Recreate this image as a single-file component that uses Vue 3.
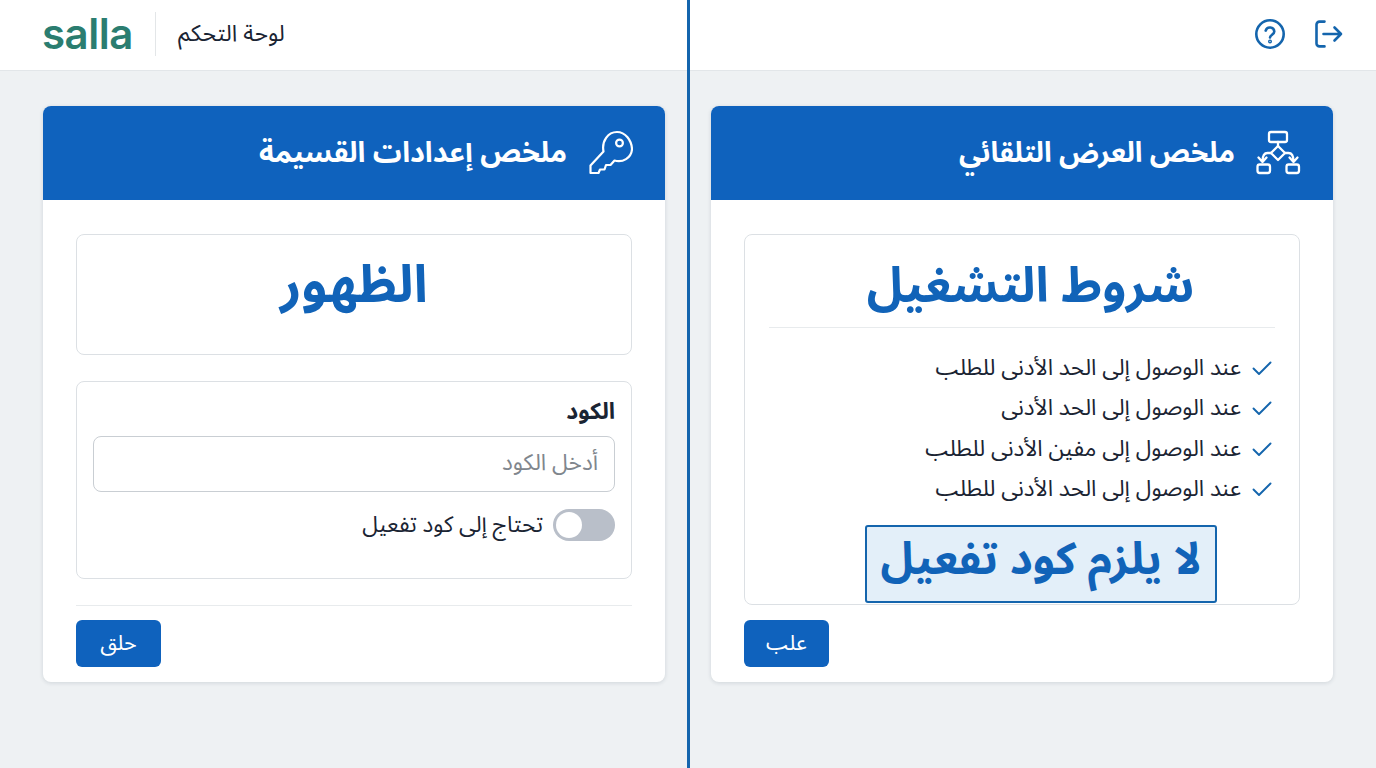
<template>
  <div class="page">
    <div class="split-line"></div>

    <header class="topbar">
      <div class="brand">
        <span class="logo">salla</span>
        <span class="brand-sep"></span>
        <span class="brand-title" dir="rtl">لوحة التحكم</span>
      </div>
      <div class="actions">
        <svg viewBox="0 0 32 32" width="32" height="32" fill="none" stroke="#1465ad" stroke-width="2.6" stroke-linecap="round" stroke-linejoin="round">
          <circle cx="16" cy="16" r="13.7" />
          <path d="M11.7 12.6a4.4 4.4 0 0 1 8.6 .9c0 2.9-4.3 3.4-4.3 6" />
          <circle cx="16" cy="23.4" r="0.7" />
        </svg>
        <svg viewBox="0 0 32 32" width="32" height="32" fill="none" stroke="#1465ad" stroke-width="2.6" stroke-linecap="round" stroke-linejoin="round">
          <path d="M12.500 3.600H7.500a3 3 0 0 0-3 3v18.800a3 3 0 0 0 3 3h5" />
          <path d="M11.500 16h17.500M22.500 9.500l6.500 6.500-6.500 6.500" />
        </svg>
      </div>
    </header>

    <main class="columns">
      <section class="col">
        <div class="card">
          <div class="card-head" dir="rtl">
            <svg viewBox="0 0 46 46" width="46" height="46" fill="none" stroke="#fff" stroke-width="2.200" stroke-linejoin="round" stroke-linecap="round">
              <path d="M16.500 21.500 3.500 35.500v7.500h8l1.500-3.500h4.500l1.500-4.500h4.500l4-4.500c8 2.500 17-2.500 17.500-11.500C44.500 10.500 38.500 2 30 2c-9 0-15.500 9-13.500 19.500Z" />
              <circle cx="32.500" cy="13" r="3.400" />
            </svg>
            <h2 class="card-title">ملخص إعدادات القسيمة</h2>
          </div>
          <div class="card-body" dir="rtl">
            <div class="panel panel-visibility">
              <h1 class="big-title">الظهور</h1>
            </div>
            <div class="panel panel-form">
              <label class="field-label">الكود</label>
              <input class="field" type="text" placeholder="أدخل الكود" />
              <div class="toggle-row">
                <span class="toggle"><span class="knob"></span></span>
                <span class="toggle-label">تحتاج إلى كود تفعيل</span>
              </div>
            </div>
            <div class="rule"></div>
            <button class="btn">حلق</button>
          </div>
        </div>
      </section>

      <section class="col">
        <div class="card">
          <div class="card-head" dir="rtl">
            <svg viewBox="0 0 46 46" width="46" height="46" fill="none" stroke="#fff" stroke-width="2.300" stroke-linejoin="round" stroke-linecap="round">
              <rect x="14" y="2" width="18" height="10" rx="2" />
              <path d="M23 12v4" />
              <path d="M23 16 30 23 23 30 16 23Z" />
              <path d="M16 23h-3.500c-3.500 0-5 3-5 8.500M3.500 27.500l4 4.500 4-4.500" />
              <path d="M30 23h3.500c3.500 0 5 3 5 8.500M34.500 27.500l4 4.500 4-4.500" />
              <rect x="2.500" y="34.500" width="12.500" height="8.500" rx="2.200" />
              <rect x="31.500" y="34.500" width="12.500" height="8.500" rx="2.200" />
            </svg>
            <h2 class="card-title auto-title">ملخص العرض التلقائي</h2>
          </div>
          <div class="card-body" dir="rtl">
            <div class="panel panel-terms">
              <h1 class="big-title terms-title">شروط التشغيل</h1>
              <ul class="terms">
                <li v-for="(term, i) in terms" :key="i">
                  <svg viewBox="0 0 20 20" width="20" height="20" fill="none" stroke="#1465ad" stroke-width="1.900" stroke-linecap="round" stroke-linejoin="round">
                    <path d="M1.500 10.500 7 16 18.500 4.500" />
                  </svg>
                  <span>{{ term }}</span>
                </li>
              </ul>
              <div class="notice">لا يلزم كود تفعيل</div>
            </div>
            <button class="btn btn-right">علب</button>
          </div>
        </div>
      </section>
    </main>
  </div>
</template>

<script setup>
const terms = [
  'عند الوصول إلى الحد الأدنى للطلب',
  'عند الوصول إلى الحد الأدنى',
  'عند الوصول إلى مفين الأدنى للطلب',
  'عند الوصول إلى الحد الأدنى للطلب'
]
</script>

<style scoped>
.page {
  position: relative;
  width: 1376px;
  height: 768px;
  overflow: hidden;
  background: #eef1f3;
  font-family: "Noto Sans Arabic", "Noto Sans", "DejaVu Sans", sans-serif;
  color: #1a2433;
}

.split-line {
  position: absolute;
  left: 687px;
  top: 0;
  bottom: 0;
  width: 3px;
  background: #1465ad;
  z-index: 2;
}

.topbar {
  display: flex;
  justify-content: space-between;
  align-items: center;
  height: 68px;
  padding: 0 32px 2px 42px;
  background: #fff;
  border-bottom: 1px solid #e2e6e9;
}

.brand {
  display: flex;
  align-items: center;
}

.logo {
  width: 90px;
  font-family: Inter, sans-serif;
  font-size: 42px;
  font-weight: 600;
  line-height: 44px;
  letter-spacing: -0.5px;
  color: #2b7d70;
}

.brand-sep {
  width: 1px;
  height: 44px;
  margin: 0 22px 0 23px;
  background: #e3e6e8;
}

.brand-title {
  font-size: 23px;
  line-height: 32px;
  color: #1a2433;
}

.actions {
  display: flex;
  gap: 26px;
  align-items: center;
}

.columns {
  display: grid;
  grid-template-columns: 622px 622px;
  gap: 46px;
  padding: 35px 43px 0;
}

.card {
  height: 576px;
  background: #fff;
  border-radius: 8px;
  overflow: hidden;
  box-shadow: 0 1px 4px rgba(30, 50, 70, 0.14);
}

.card-head {
  display: flex;
  align-items: center;
  gap: 20px;
  height: 94px;
  padding: 0 32px;
  background: #0f62bd;
  color: #fff;
}

.card-title {
  margin: 0 0 1px;
  font-size: 28.700px;
  line-height: 40px;
  font-weight: 700;
}

.auto-title {
  font-size: 28.200px;
}

.card-body {
  padding: 34px 33px 0;
}

.panel {
  border: 1px solid #dcE0e4;
  border-radius: 8px;
  background: #fff;
}

.panel-visibility {
  display: flex;
  justify-content: center;
  height: 121px;
  box-sizing: border-box;
  padding-top: 19px;
}

.big-title {
  margin: 0;
  font-size: 52px;
  line-height: 64px;
  font-weight: 700;
  color: #1163b8;
}

.panel-form {
  height: 198px;
  box-sizing: border-box;
  margin-top: 26px;
  padding: 16px 16px 0;
}

.field-label {
  display: block;
  font-size: 23px;
  line-height: 28px;
  font-weight: 700;
  color: #1a2433;
}

.field {
  display: block;
  width: 100%;
  height: 56px;
  box-sizing: border-box;
  margin-top: 10px;
  padding: 0 16px 3px;
  border: 1.500px solid #c9ced3;
  border-radius: 8px;
  font-family: inherit;
  font-size: 22.600px;
  background: #fff;
}

.field::placeholder {
  color: #80868d;
}

.toggle-row {
  display: flex;
  align-items: center;
  gap: 10px;
  margin-top: 17px;
}

.toggle {
  display: flex;
  justify-content: flex-end;
  align-items: center;
  width: 62px;
  height: 32px;
  padding: 0 3px;
  box-sizing: border-box;
  border-radius: 16px;
  background: #b9bfc9;
}

.knob {
  width: 26px;
  height: 26px;
  border-radius: 50%;
  background: #fff;
}

.toggle-label {
  font-size: 22.500px;
  line-height: 32px;
}

.rule {
  height: 1px;
  margin-top: 26px;
  background: #e8ebed;
}

.btn {
  display: block;
  width: 85px;
  height: 47px;
  margin: 14px auto 0 0;
  padding: 0 0 2px;
  border: none;
  border-radius: 6px;
  background: #0f62bd;
  color: #fff;
  font-family: inherit;
  font-size: 21.500px;
  line-height: 30px;
}

.btn-right {
  margin: 15px 0 0 0;
  margin-inline-start: auto;
}

.panel-terms {
  display: flex;
  flex-direction: column;
  align-items: center;
  height: 371px;
  box-sizing: border-box;
  padding: 18px 24px 0;
}

.terms-title {
  width: 100%;
  height: 75px;
  box-sizing: border-box;
  padding: 2px 0 0 17px;
  font-size: 48.500px;
  text-align: center;
  border-bottom: 1px solid #e8ebed;
}

.terms {
  width: 100%;
  margin: 0;
  padding: 20px 3px 0 0;
  box-sizing: border-box;
  list-style: none;
}

.terms li {
  display: flex;
  align-items: center;
  gap: 11px;
  height: 40.300px;
  font-size: 22.500px;
  line-height: 32px;
}

.notice {
  width: 352px;
  height: 78px;
  box-sizing: border-box;
  margin: 16px 0 0 38px;
  border: 2px solid #1465ad;
  border-radius: 3px;
  background: #e3eff9;
  color: #1163b8;
  font-size: 44.500px;
  font-weight: 700;
  line-height: 66px;
  text-align: center;
}
</style>

<style>
html, body { margin: 0; padding: 0; }
</style>
